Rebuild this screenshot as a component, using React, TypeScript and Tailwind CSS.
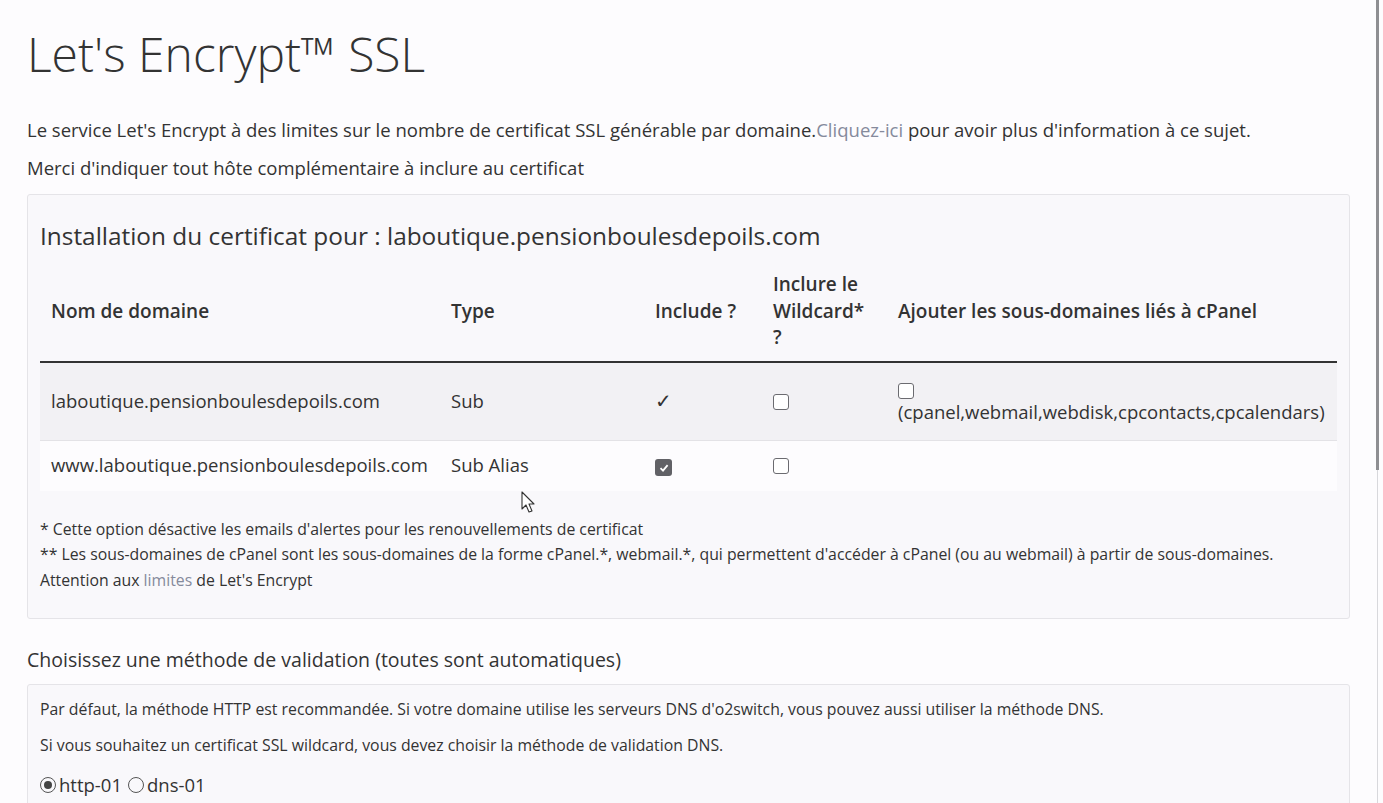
import React from "react";

const Box: React.FC<{ checked?: boolean }> = ({ checked }) =>
  checked ? (
    <span className="inline-flex h-[17px] w-[17px] items-center justify-center rounded-[3px] bg-[#616166]">
      <svg viewBox="0 0 12 12" className="h-[12px] w-[12px]">
        <path d="M2.5 6.2 L5 8.6 L9.6 3.2" fill="none" stroke="#fff" strokeWidth="1.8" />
      </svg>
    </span>
  ) : (
    <span className="inline-block h-[16px] w-[16px] rounded-[3px] border border-[#6b6b70] bg-white" />
  );

const Radio: React.FC<{ checked?: boolean }> = ({ checked }) => (
  <span className="inline-flex h-[16px] w-[16px] items-center justify-center rounded-full border border-[#555]">
    {checked && <span className="h-[8px] w-[8px] rounded-full bg-[#444]" />}
  </span>
);

const Cursor: React.FC = () => (
  <svg viewBox="0 0 16 24" className="absolute left-[521px] top-[491px] h-[24px] w-[16px]">
    <path d="M1 1 L1 18 L5 14 L8 21 L11 20 L8 13 L13 13 Z" fill="#fff" stroke="#333" strokeWidth="1.1" strokeLinejoin="round" />
  </svg>
);

export default function App() {
  return (
    <div
      className="relative flex h-[803px] w-[1383px] overflow-hidden bg-[#fdfcfe] text-[#333]"
      style={{ fontFamily: "'Open Sans', sans-serif" }}
    >
      <div className="flex-1 pl-[27px] pr-[22px]">
        <h1 className="mt-[24px] text-[48px] font-light leading-[60px] text-[#333]">Let's Encrypt™ SSL</h1>

        <p className="mt-[33px] whitespace-nowrap text-[18.5px] leading-[26px]">
          Le service Let's Encrypt à des limites sur le nombre de certificat SSL générable par domaine.
          <span className="text-[#858a9c]">Cliquez-ici</span> pour avoir plus d'information à ce sujet.
        </p>
        <p className="mt-[12px] text-[18.5px] leading-[26px]">Merci d'indiquer tout hôte complémentaire à inclure au certificat</p>

        <div className="mt-[13px] rounded-[3px] border border-[#e5e4e8] bg-[#f9f8fb] px-[12px] pb-[25px] pt-[26px]">
          <h2 className="whitespace-nowrap text-[24.4px] leading-[30px]">
            Installation du certificat pour : laboutique.pensionboulesdepoils.com
          </h2>

          <table className="mt-[12px] w-full table-fixed border-collapse text-left">
            <thead>
              <tr className="border-b-2 border-[#333] text-[19px] font-semibold leading-[26.5px]">
                <th className="w-[400px] px-[11px] pb-[10px] pt-[8px] align-middle font-semibold">Nom de domaine</th>
                <th className="w-[204px] px-[11px] pb-[10px] pt-[8px] align-middle font-semibold">Type</th>
                <th className="w-[118px] px-[11px] pb-[10px] pt-[8px] align-middle font-semibold">Include ?</th>
                <th className="w-[125px] px-[11px] pb-[10px] pt-[8px] align-middle font-semibold">
                  Inclure le
                  <br />
                  Wildcard*
                  <br />?
                </th>
                <th className="whitespace-nowrap px-[11px] pb-[10px] pt-[8px] align-middle font-semibold">
                  Ajouter les sous-domaines liés à cPanel
                </th>
              </tr>
            </thead>
            <tbody className="text-[18.5px] leading-[26px]">
              <tr className="h-[79px] border-b border-[#e3e2e6] bg-[#f2f1f4]">
                <td className="whitespace-nowrap px-[11px]">laboutique.pensionboulesdepoils.com</td>
                <td className="px-[11px]">Sub</td>
                <td className="px-[11px] text-[20px]">✓</td>
                <td className="px-[11px] pt-[4px]">
                  <Box />
                </td>
                <td className="whitespace-nowrap px-[11px] pt-[4px]">
                  <div className="flex h-[18px] items-end">
                    <Box />
                  </div>
                  <div>(cpanel,webmail,webdisk,cpcontacts,cpcalendars)</div>
                </td>
              </tr>
              <tr className="h-[50px] bg-[#fdfcfe]">
                <td className="whitespace-nowrap pb-[2px] pl-[11px] pr-0">www.laboutique.pensionboulesdepoils.com</td>
                <td className="px-[11px] pb-[2px]">Sub Alias</td>
                <td className="px-[11px] pt-[2px]">
                  <Box checked />
                </td>
                <td className="px-[11px] pt-[2px]">
                  <Box />
                </td>
                <td className="px-[11px]" />
              </tr>
            </tbody>
          </table>

          <div className="mt-[26px] whitespace-nowrap text-[15.8px] leading-[25.5px]">
            <p>* Cette option désactive les emails d'alertes pour les renouvellements de certificat</p>
            <p>
              ** Les sous-domaines de cPanel sont les sous-domaines de la forme cPanel.*, webmail.*, qui permettent d'accéder à cPanel (ou au webmail) à partir de sous-domaines.
            </p>
            <p>
              Attention aux <span className="text-[#858a9c]">limites</span> de Let's Encrypt
            </p>
          </div>
        </div>

        <p className="mt-[28px] text-[19.5px] leading-[26px]">Choisissez une méthode de validation (toutes sont automatiques)</p>

        <div className="mt-[11px] rounded-[3px] border border-[#e5e4e8] bg-[#f9f8fb] px-[12px] pt-[12px] text-[15.8px] leading-[24px]">
          <p className="whitespace-nowrap">
            Par défaut, la méthode HTTP est recommandée. Si votre domaine utilise les serveurs DNS d'o2switch, vous pouvez aussi utiliser la méthode DNS.
          </p>
          <p className="mt-[12px]">Si vous souhaitez un certificat SSL wildcard, vous devez choisir la méthode de validation DNS.</p>
          <div className="mt-[16px] flex items-center text-[18.5px]">
            <Radio checked />
            <span className="ml-[3px] mr-[6px]">http-01</span>
            <Radio />
            <span className="ml-[3px]">dns-01</span>
          </div>
          <div className="h-[30px]" />
        </div>
      </div>

      <div className="flex w-[11px] flex-col items-center">
        <div className="h-[470px] w-[3px] bg-[#8e8e92]" />
        <div className="w-[1px] flex-1 bg-[#d8d8dc]" />
      </div>

      <Cursor />
    </div>
  );
}
